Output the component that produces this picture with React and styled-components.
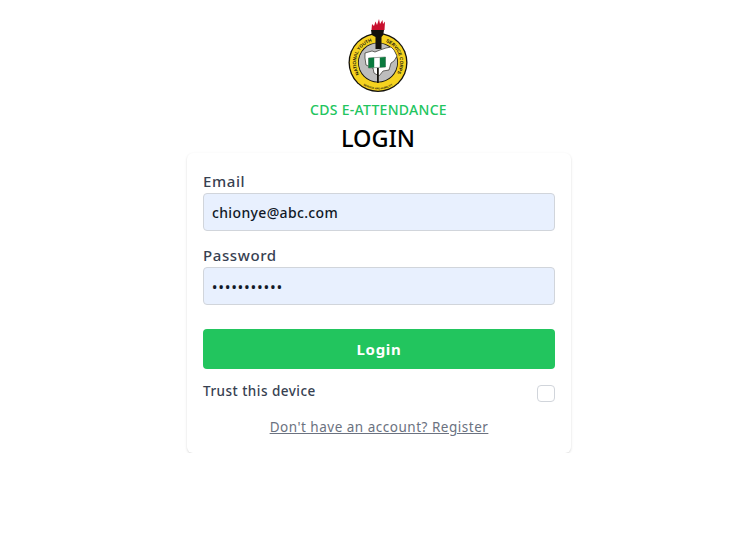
import React from 'react'
import styled, { createGlobalStyle } from 'styled-components'

const GlobalStyle = createGlobalStyle`
  * {
    box-sizing: border-box;
  }

  body {
    margin: 0;
    background: #fff;
    font-family: 'Noto Sans', 'Open Sans', sans-serif;
  }
`

const Page = styled.main`
  display: flex;
  flex-direction: column;
  align-items: center;
  padding: 17px 0 0 4px;
`

const Logo = styled.svg`
  display: block;
  width: 76px;
  height: 78px;
  margin-right: 3px;
`

const Subtitle = styled.p`
  margin: 5px 0 0;
  height: 20px;
  font-size: 14px;
  line-height: 20px;
  font-weight: 500;
  letter-spacing: 0.02em;
  color: #22c55e;
  transform: translateX(-0.5px);
`

const Title = styled.h1`
  margin: 0;
  height: 33px;
  font-size: 23.5px;
  line-height: 36px;
  font-weight: 500;
  color: #000;
  transform: translateX(-1px);
`

const Card = styled.form`
  width: 384px;
  height: 300px;
  padding: 16px;
  border-radius: 6px;
  background: #fff;
  box-shadow: 0 1px 3px rgba(0, 0, 0, 0.1), 0 1px 2px rgba(0, 0, 0, 0.06);
`

const Field = styled.div`
  margin-bottom: 12px;
`

const Label = styled.label`
  display: block;
  height: 24px;
  font-size: 15px;
  line-height: 24px;
  font-weight: 500;
  letter-spacing: 0.6px;
  color: #374151;
`

const Input = styled.input`
  display: block;
  width: 100%;
  height: 38px;
  padding: 0 8px;
  border: 1px solid #d1d5db;
  border-radius: 4px;
  background: #e8f0fe;
  font-family: inherit;
  font-size: 14px;
  font-weight: 500;
  letter-spacing: ${(props) => (props.type === 'password' ? '1.2px' : '0.025em')};
  color: #111827;
  outline: none;
`

const SubmitButton = styled.button`
  display: block;
  width: 100%;
  height: 40px;
  margin-top: 24px;
  border: 0;
  border-radius: 4px;
  background: #22c55e;
  font-family: inherit;
  font-size: 15px;
  font-weight: 700;
  letter-spacing: 0.05em;
  color: #fff;
`

const TrustRow = styled.div`
  display: flex;
  align-items: flex-start;
  justify-content: space-between;
  height: 24px;
  margin-top: 12px;
`

const TrustLabel = styled.span`
  font-size: 13.5px;
  line-height: 20px;
  font-weight: 500;
  letter-spacing: 0.48px;
  color: #374151;
`

const Checkbox = styled.input.attrs({ type: 'checkbox' })`
  appearance: none;
  width: 18px;
  height: 17px;
  margin: 4px 0 0;
  border: 1px solid #d1d5db;
  border-radius: 4px;
  background: #fff;
`

const RegisterLink = styled.a`
  display: block;
  margin-top: 12px;
  font-size: 13.5px;
  line-height: 20px;
  letter-spacing: 0.51px;
  text-align: center;
  text-decoration: underline;
  color: #6b7280;
`

const NyscLogo = () => (
  <Logo viewBox="0 0 76 78" aria-label="NYSC logo">
    <defs>
      <path id="ringLeft" d="M21.15 59.64A22 22 0 0 1 34.94 23.71" />
      <path id="ringRight" d="M41.82 23.83A22 22 0 0 1 54.85 59.64" />
      <path id="ringBottom" d="M20 65.5A27 27 0 0 0 56 65.5" />
    </defs>
    {/* ring */}
    <circle cx="38" cy="45.5" r="29.5" fill="#14120c" />
    <circle cx="38" cy="45.5" r="28.2" fill="#f5d21f" />
    <circle cx="38" cy="45.5" r="20" fill="#14120c" />
    <circle cx="38" cy="45.5" r="19.2" fill="#bdbdbd" />
    <text fontFamily="Liberation Sans, sans-serif" fontSize="4.6" fontWeight="700" fill="#14120c">
      <textPath href="#ringLeft" startOffset="50%" textAnchor="middle">
        NATIONAL YOUTH
      </textPath>
    </text>
    <text fontFamily="Liberation Sans, sans-serif" fontSize="4.6" fontWeight="700" fill="#14120c">
      <textPath href="#ringRight" startOffset="50%" textAnchor="middle">
        SERVICE CORPS
      </textPath>
    </text>
    <text fontFamily="Liberation Sans, sans-serif" fontSize="2.6" fontWeight="700" fill="#14120c">
      <textPath href="#ringBottom" startOffset="50%" textAnchor="middle">
        SERVICE AND HUMILITY
      </textPath>
    </text>
    {/* map */}
    <path
      d="M25 36l7-2 3 1 5-2 6-2 5-1 3 3 3 6-3 5-3 2-2 7-6 1-4 5-5-3-1-5-7-3-1-7z"
      fill="#fff"
      stroke="#14120c"
      strokeWidth="0.6"
    />
    {/* flag */}
    <path d="M28.5 41l17-1v10l-17 1z" fill="#fff" stroke="#14120c" strokeWidth="0.4" />
    <path d="M28.5 41l5.7-.4v10l-5.7.4zM39.800 40.400l5.700-.400v10l-5.700.400z" fill="#0a7a3e" />
    {/* torch */}
    <path d="M31 13h13l-.8 5-1.700 2v12h-6V20l-3.700-2z" fill="#14120c" />
    <path d="M37 51h1.800v15H37z" fill="#14120c" />
    {/* flame */}
    <path d="M31.500 13l.5-6 2 2 1.500-4.500 1.500 3.500 2-6 1 5 2.500-4 .5 4 2-2.500-.5 8.500z" fill="#c8102e" />
  </Logo>
)

const App = () => (
  <>
    <GlobalStyle />
    <Page>
      <NyscLogo />
      <Subtitle>CDS E-ATTENDANCE</Subtitle>
      <Title>LOGIN</Title>
      <Card>
        <Field>
          <Label htmlFor="email">Email</Label>
          <Input id="email" type="email" defaultValue="chionye@abc.com" />
        </Field>
        <Field>
          <Label htmlFor="password">Password</Label>
          <Input id="password" type="password" defaultValue="password123" />
        </Field>
        <SubmitButton type="button">Login</SubmitButton>
        <TrustRow>
          <TrustLabel>Trust this device</TrustLabel>
          <Checkbox />
        </TrustRow>
        <RegisterLink href="#register">Don't have an account? Register</RegisterLink>
      </Card>
    </Page>
  </>
)

export default App
